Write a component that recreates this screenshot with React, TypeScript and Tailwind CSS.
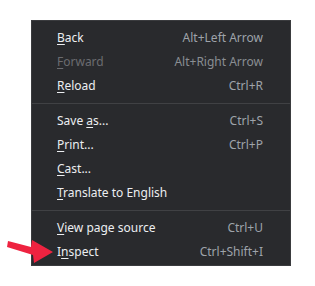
import React from "react";

type Item = {
  label: React.ReactNode;
  shortcut?: string;
  disabled?: boolean;
};

const u = (s: string) => <span className="underline underline-offset-2">{s}</span>;

const groups: Item[][] = [
  [
    { label: <>{u("B")}ack</>, shortcut: "Alt+Left Arrow" },
    { label: <>{u("F")}orward</>, shortcut: "Alt+Right Arrow", disabled: true },
    { label: <>{u("R")}eload</>, shortcut: "Ctrl+R" },
  ],
  [
    { label: <>Save {u("a")}s...</>, shortcut: "Ctrl+S" },
    { label: <>{u("P")}rint...</>, shortcut: "Ctrl+P" },
    { label: <>{u("C")}ast...</> },
    { label: <>{u("T")}ranslate to English</> },
  ],
  [
    { label: <>{u("V")}iew page source</>, shortcut: "Ctrl+U" },
    { label: <>I{u("n")}spect</>, shortcut: "Ctrl+Shift+I" },
  ],
];

function Row({ item }: { item: Item }) {
  return (
    <div className="flex h-6 items-center justify-between pl-[25px] pr-[27px]">
      <span className={item.disabled ? "text-[#6b6c70]" : "text-[#eceef1]"}>{item.label}</span>
      {item.shortcut && (
        <span className={item.disabled ? "text-[#8a8e93]" : "text-[#9ea3aa]"}>{item.shortcut}</span>
      )}
    </div>
  );
}

export default function App() {
  return (
    <div className="relative h-[286px] w-[315px] bg-white">
      <div
        className="ml-[31px] pt-[20px]"
        style={{ fontFamily: '"Noto Sans", "Open Sans", sans-serif' }}
      >
        <div className="w-[260px] border border-[#3a3b3e] bg-[#292a2d] pb-[1px] pt-[5px] text-[12px]">
          {groups.map((g, gi) => (
            <div key={gi}>
              {gi > 0 && (
                <div className="py-[5px]">
                  <div className="h-px bg-[#404144]" />
                </div>
              )}
              {g.map((it, i) => (
                <Row key={i} item={it} />
              ))}
            </div>
          ))}
        </div>
      </div>
      <svg className="absolute left-0 top-[236px]" width="60" height="30" viewBox="0 0 60 30">
        <polygon
          points="8,5 31,11 32,4 53,16 34,27 33,19 7,11"
          fill="#ee2340"
        />
      </svg>
    </div>
  );
}
